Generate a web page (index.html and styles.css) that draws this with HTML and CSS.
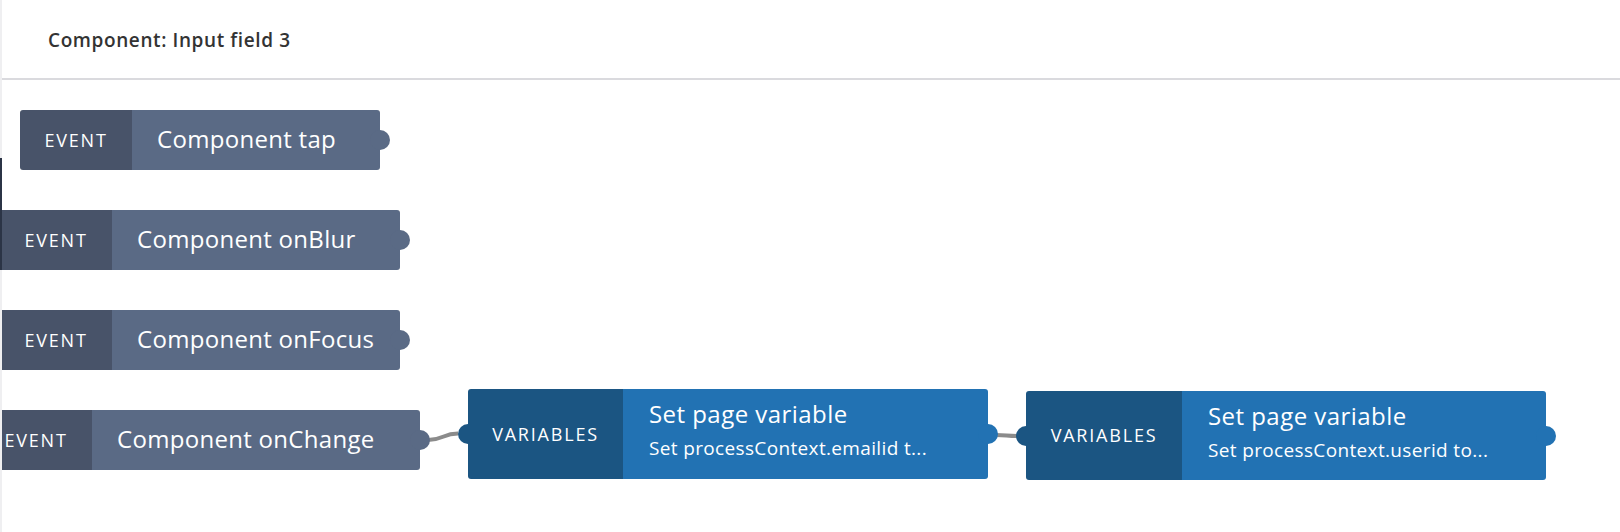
FILE: index.html
```html
<!DOCTYPE html>
<html lang="en">
<head>
<meta charset="utf-8">
<title>Component: Input field 3</title>
<link rel="stylesheet" href="styles.css">
</head>
<body>
<div class="page">
  <div class="edge-marker"></div>
  <header class="header">
    <h1 class="header-title">Component: Input field 3</h1>
  </header>
  <main class="canvas">
    <svg class="links" width="1618" height="452" viewBox="0 0 1618 452" xmlns="http://www.w3.org/2000/svg">
      <path d="M426 360 C441 360 441 353.5 456 353.5" />
      <path d="M994 355 C1004 355 1005 356 1015 356" />
    </svg>

    <div class="node node-event node-tap">
      <div class="node-label">EVENT</div>
      <div class="node-body"><span class="node-title">Component tap</span></div>
    </div>

    <div class="node node-event node-blur">
      <div class="node-label">EVENT</div>
      <div class="node-body"><span class="node-title">Component onBlur</span></div>
    </div>

    <div class="node node-event node-focus">
      <div class="node-label">EVENT</div>
      <div class="node-body"><span class="node-title">Component onFocus</span></div>
    </div>

    <div class="node node-event node-change">
      <div class="node-label">EVENT</div>
      <div class="node-body"><span class="node-title">Component onChange</span></div>
    </div>

    <div class="node node-var node-var1">
      <div class="node-label">VARIABLES</div>
      <div class="node-body">
        <div class="node-title">Set page variable</div>
        <div class="node-sub">Set processContext.emailid t...</div>
      </div>
    </div>

    <div class="node node-var node-var2">
      <div class="node-label">VARIABLES</div>
      <div class="node-body">
        <div class="node-title">Set page variable</div>
        <div class="node-sub">Set processContext.userid to...</div>
      </div>
    </div>
  </main>
</div>
</body>
</html>
```

FILE: styles.css
```css
html, body {
  margin: 0;
  padding: 0;
  background: #ffffff;
}

body {
  font-family: "Open Sans", "Liberation Sans", sans-serif;
  color: #333333;
  width: 1620px;
  height: 532px;
  overflow: hidden;
}

.page {
  position: relative;
  height: 532px;
  border-left: 2px solid #efeff1;
  box-sizing: border-box;
}

.edge-marker {
  position: absolute;
  left: -2px;
  top: 158px;
  width: 2px;
  height: 112px;
  background: #2b3446;
}

.header {
  height: 80px;
  box-sizing: border-box;
  padding: 28px 0 0 46px;
  border-bottom: 2px solid #dadade;
}

.header-title {
  margin: 0;
  font-size: 19px;
  line-height: 24px;
  font-weight: 600;
  color: #333333;
  letter-spacing: 0.6px;
}

.canvas {
  position: relative;
  height: 452px;
  overflow: hidden;
}

.links {
  position: absolute;
  left: 0;
  top: 0;
}

.links path {
  fill: none;
  stroke: #8b8b8b;
  stroke-width: 4;
}

.node {
  position: absolute;
  display: flex;
  border-radius: 3px;
  color: #ffffff;
}

.node-label {
  display: flex;
  align-items: center;
  justify-content: center;
  font-size: 18px;
  letter-spacing: 1.8px;
  border-radius: 3px 0 0 3px;
  flex: none;
}

.node-body {
  flex: 1;
  border-radius: 0 3px 3px 0;
}

/* connector nubs */
.node::after {
  content: "";
  position: absolute;
  right: -10px;
  top: 50%;
  width: 20px;
  height: 20px;
  margin-top: -10px;
  border-radius: 50%;
}

/* EVENT nodes */
.node-event {
  height: 60px;
}

.node-event .node-label {
  width: 112px;
  background: #485369;
}

.node-event .node-body {
  display: flex;
  align-items: center;
  padding: 0 0 2px 25px;
  background: #5a6a85;
}

.node-event .node-title {
  font-size: 24px;
  line-height: 30px;
  letter-spacing: 0.3px;
}

.node-event::after {
  background: #5a6a85;
}

.node-tap { left: 18px; top: 30px; width: 360px; }
.node-blur { left: -2px; top: 130px; width: 400px; }
.node-focus { left: -2px; top: 230px; width: 400px; }
.node-change { left: -22px; top: 330px; width: 440px; }

/* VARIABLES nodes */
.node-var {
  height: 90px;
  width: 520px;
}

.node-var::before {
  content: "";
  position: absolute;
  left: -10px;
  top: 50%;
  width: 20px;
  height: 20px;
  margin-top: -10px;
  border-radius: 50%;
  background: #1b5582;
}

.node-var::after {
  background: #2272b3;
}

.node-var .node-label {
  width: 155px;
  background: #1b5582;
  position: relative;
  padding-bottom: 1px;
}

.node-var .node-body {
  background: #2272b3;
  padding: 10px 0 0 26px;
}

.node-var .node-title {
  font-size: 24px;
  line-height: 30px;
  letter-spacing: 0.45px;
}

.node-var .node-sub {
  margin-top: 7px;
  font-size: 19px;
  line-height: 24px;
  letter-spacing: 0.35px;
}

.node-var1 { left: 466px; top: 309px; }
.node-var2 { left: 1024px; top: 311px; height: 89px; }
.node-var2 .node-label { width: 156px; }
```
